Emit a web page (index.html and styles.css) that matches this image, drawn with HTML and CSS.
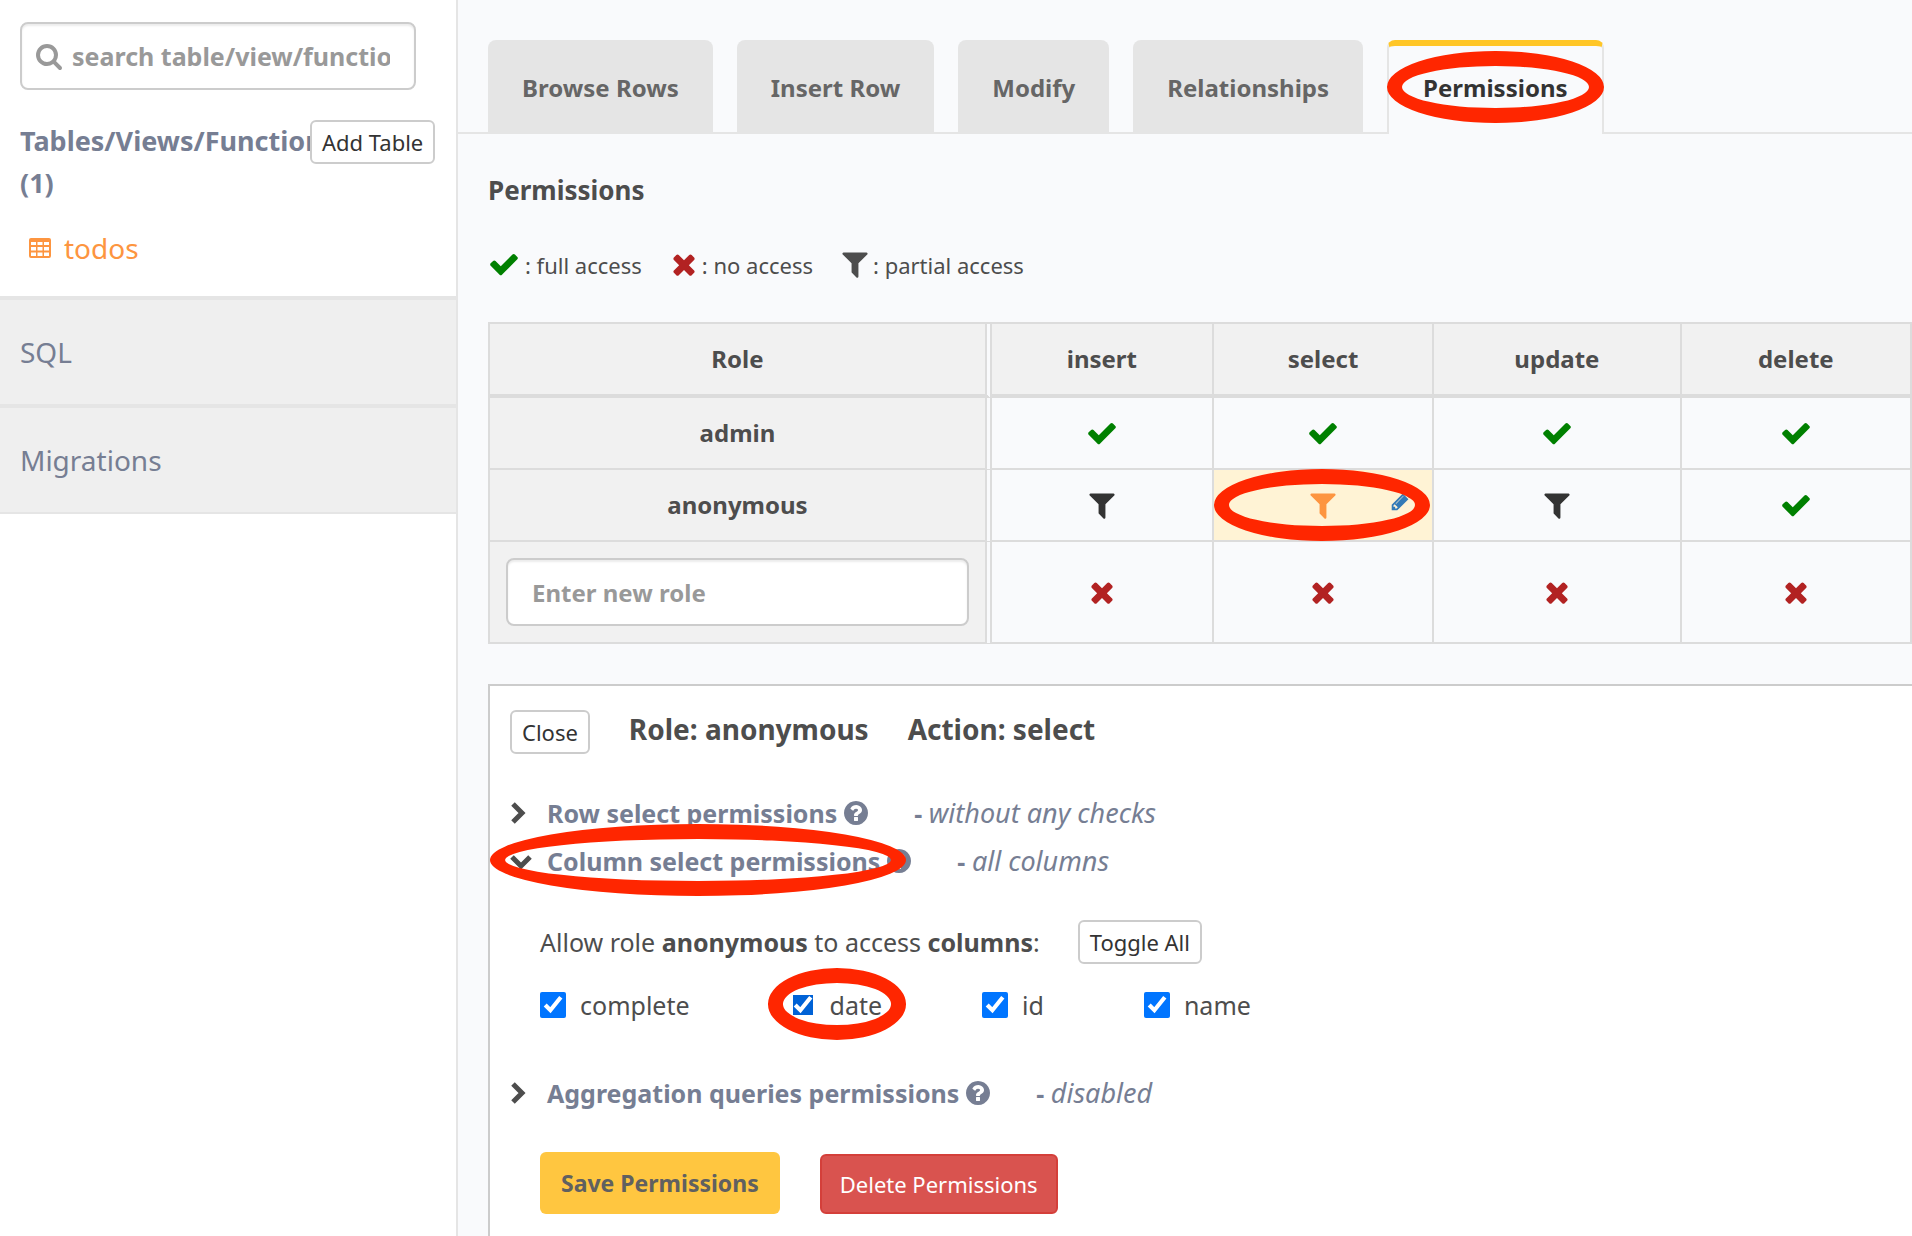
FILE: index.html
```html
<!DOCTYPE html>
<html lang="en">
<head>
<meta charset="utf-8">
<title>Permissions - todos</title>
<link rel="stylesheet" href="styles.css">
</head>
<body>
<svg class="sprite" aria-hidden="true">
  <symbol id="check" viewBox="0 0 1792 1792"><path d="M1671 566q0 40-28 68l-724 724-136 136q-28 28-68 28t-68-28l-136-136-362-362q-28-28-28-68t28-68l136-136q28-28 68-28t68 28l294 295 656-657q28-28 68-28t68 28l136 136q28 28 28 68z"/></symbol>
  <symbol id="times" viewBox="0 0 1792 1792"><path d="M1490 1322q0 40-28 68l-136 136q-28 28-68 28t-68-28l-294-294-294 294q-28 28-68 28t-68-28l-136-136q-28-28-28-68t28-68l294-294-294-294q-28-28-28-68t28-68l136-136q28-28 68-28t68 28l294 294 294-294q28-28 68-28t68 28l136 136q28 28 28 68t-28 68l-294 294 294 294q28 28 28 68z"/></symbol>
  <symbol id="filter" viewBox="0 0 1792 1792"><path d="M1595 295q17 41-14 70l-493 493v742q0 42-39 59-13 5-25 5-27 0-45-19l-256-256q-19-19-19-45v-486l-493-493q-31-29-14-70 17-39 59-39h1280q42 0 59 39z"/></symbol>
  <symbol id="search" viewBox="0 0 1792 1792"><path d="M1216 832q0-185-131.5-316.5t-316.5-131.5-316.5 131.5-131.5 316.5 131.5 316.5 316.5 131.5 316.5-131.5 131.5-316.5zm512 832q0 52-38 90t-90 38q-54 0-90-38l-343-342q-179 124-399 124-143 0-273.5-55.5t-225-150-150-225-55.5-273.5 55.5-273.5 150-225 225-150 273.5-55.5 273.5 55.5 225 150 150 225 55.5 273.5q0 220-124 399l343 343q37 37 37 90z"/></symbol>
  <symbol id="pencil" viewBox="0 0 1792 1792"><path d="M491 1536l91-91-235-235-91 91v107h128v128h107zm523-928q0-22-22-22-10 0-17 7l-542 542q-7 7-7 17 0 22 22 22 10 0 17-7l542-542q7-7 7-17zm-54-192l416 416-832 832h-416v-416zm683 96q0 53-37 90l-166 166-416-416 166-165q36-38 90-38 53 0 91 38l235 234q37 39 37 91z"/></symbol>
  <symbol id="question" viewBox="0 0 1792 1792"><path d="M1024 1376v-192q0-14-9-23t-23-9h-192q-14 0-23 9t-9 23v192q0 14 9 23t23 9h192q14 0 23-9t9-23zm256-672q0-88-55.5-163t-138.5-116-170-41q-243 0-371 213-15 24 8 42l132 100q7 6 19 6 16 0 25-12 53-68 86-92 34-24 86-24 48 0 85.5 26t37.5 59q0 38-20 61t-68 45q-63 28-115.5 86.5t-52.5 125.5v36q0 14 9 23t23 9h192q14 0 23-9t9-23q0-19 21.5-49.5t54.5-49.5q32-18 49-28.5t46-35 44.5-48 28-60.5 12.5-81zm384 192q0 209-103 385.5t-279.5 279.5-385.5 103-385.5-103-279.5-279.5-103-385.5 103-385.5 279.5-279.5 385.5-103 385.5 103 279.5 279.5 103 385.5z"/></symbol>
  <symbol id="grid" viewBox="0 0 24 20"><path fill-rule="evenodd" d="M3 0h18a2 2 0 0 1 2 2v16a2 2 0 0 1-2 2H3a2 2 0 0 1-2-2V2a2 2 0 0 1 2-2zM3 4v3h5V4zM9.500 4v3h5V4zM16 4v3h5V4zM3 9v3.500h5V9zM9.500 9v3.500h5V9zM16 9v3.500h5V9zM3 14.500V18h5v-3.500zM9.500 14.500V18h5v-3.500zM16 14.500V18h5v-3.500z"/></symbol>
  <symbol id="right" viewBox="0 0 22 22"><path d="M3 2l9 9-9 9" fill="none" stroke="currentColor" stroke-width="5"/></symbol>
  <symbol id="down" viewBox="0 0 22 22"><path d="M2 7l9 9 9-9" fill="none" stroke="currentColor" stroke-width="5"/></symbol>
</svg>

<div class="app">
  <aside class="sidebar">
    <section class="tables">
      <label class="search">
        <svg class="icon-md"><use href="#search"/></svg>
        <input class="field" type="text" placeholder="search table/view/function" aria-label="search table/view/function">
      </label>
      <div class="tables-head">
        <h2 class="tables-title">Tables/Views/Functions (1)</h2>
        <button class="btn add" type="button">Add Table</button>
      </div>
      <a class="table-link" href="#todos"><svg class="icon-grid"><use href="#grid"/></svg>todos</a>
    </section>
    <nav class="side-nav">
      <a href="#sql">SQL</a>
      <a href="#migrations">Migrations</a>
    </nav>
  </aside>

  <main class="main">
    <nav class="tabs">
      <a class="tab" href="#browse">Browse Rows</a>
      <a class="tab" href="#insert">Insert Row</a>
      <a class="tab" href="#modify">Modify</a>
      <a class="tab" href="#relationships">Relationships</a>
      <a class="tab active" href="#permissions">Permissions<i class="ring ring-tab"></i></a>
    </nav>

    <div class="content">
      <h1 class="title">Permissions</h1>
      <div class="legend">
        <span><svg class="icon full"><use href="#check"/></svg>: full access</span>
        <span><svg class="icon none"><use href="#times"/></svg>: no access</span>
        <span><svg class="icon"><use href="#filter"/></svg>: partial access</span>
      </div>

      <table class="roles">
        <colgroup><col class="c-role"><col class="c-insert"><col class="c-select"><col class="c-update"><col></colgroup>
        <thead>
          <tr><th>Role</th><th>insert</th><th>select</th><th>update</th><th>delete</th></tr>
        </thead>
        <tbody>
          <tr>
            <th>admin</th>
            <td><svg class="icon full"><use href="#check"/></svg></td>
            <td><svg class="icon full"><use href="#check"/></svg></td>
            <td><svg class="icon full"><use href="#check"/></svg></td>
            <td><svg class="icon full"><use href="#check"/></svg></td>
          </tr>
          <tr>
            <th>anonymous</th>
            <td><svg class="icon partial"><use href="#filter"/></svg></td>
            <td class="selected"><svg class="icon"><use href="#filter"/></svg><svg class="edit"><use href="#pencil"/></svg><i class="ring ring-cell"></i></td>
            <td><svg class="icon partial"><use href="#filter"/></svg></td>
            <td><svg class="icon full"><use href="#check"/></svg></td>
          </tr>
          <tr class="new-role">
            <th><input class="field" type="text" placeholder="Enter new role" aria-label="Enter new role"></th>
            <td><svg class="icon none"><use href="#times"/></svg></td>
            <td><svg class="icon none"><use href="#times"/></svg></td>
            <td><svg class="icon none"><use href="#times"/></svg></td>
            <td><svg class="icon none"><use href="#times"/></svg></td>
          </tr>
        </tbody>
      </table>

      <section class="panel">
        <header class="panel-head">
          <button class="btn" type="button">Close</button>
          <h2>Role: anonymous</h2>
          <h2>Action: select</h2>
        </header>

        <div class="section">
          <svg class="chevron"><use href="#right"/></svg>
          <b>Row select permissions</b>
          <svg class="icon-md"><use href="#question"/></svg>
          <span class="note"><b>-</b> <em>without any checks</em></span>
        </div>
        <div class="section">
          <svg class="chevron"><use href="#down"/></svg>
          <b>Column select permissions</b>
          <svg class="icon-md"><use href="#question"/></svg>
          <span class="note"><b>-</b> <em>all columns</em></span>
          <i class="ring ring-section"></i>
        </div>

        <div class="columns">
          <div class="allow">
            <span>Allow role <b>anonymous</b> to access <b>columns</b>:</span>
            <button class="btn" type="button">Toggle All</button>
          </div>
          <div class="checks">
            <label><input type="checkbox" checked>complete</label>
            <label><input class="focused" type="checkbox" checked>date<i class="ring ring-check"></i></label>
            <label><input type="checkbox" checked>id</label>
            <label><input type="checkbox" checked>name</label>
          </div>
        </div>

        <div class="section">
          <svg class="chevron"><use href="#right"/></svg>
          <b>Aggregation queries permissions</b>
          <svg class="icon-md"><use href="#question"/></svg>
          <span class="note"><b>-</b> <em>disabled</em></span>
        </div>

        <div class="actions">
          <button class="save" type="button">Save Permissions</button>
          <button class="delete" type="button">Delete Permissions</button>
        </div>
      </section>
    </div>
  </main>
</div>
</body>
</html>
```
FILE: styles.css
```css
* { box-sizing: border-box; }
body {
  margin: 0;
  background: #f9fafc;
  color: #4d4d4d;
  font: 25px/48px "Noto Sans", sans-serif;
}
h1, h2 { margin: 0; }
a { color: inherit; text-decoration: none; }
button, input { font: inherit; margin: 0; }
svg { fill: currentColor; flex: none; }
.sprite { display: none; }
.icon { width: 32px; height: 32px; }
.icon-md { width: 28px; height: 28px; }
.full { color: #008000; }
.none { color: #b22222; }
.partial { color: #333; }

.app { display: flex; min-height: 100vh; }

/* Sidebar */
.sidebar {
  flex: none;
  width: 458px;
  background: #fff;
  border-right: 2px solid #e5e5e5;
  color: #767e93;
}
.tables { padding: 22px 20px 24px; }
.field {
  display: block;
  width: 100%;
  height: 68px;
  padding: 0 24px;
  border: 2px solid #ccc;
  border-radius: 8px;
  background: #fff;
  box-shadow: inset 0 2px 2px rgba(0, 0, 0, .08);
  font-weight: bold;
}
.field::placeholder { color: #999; opacity: 1; }
.search { display: grid; width: 396px; align-items: center; }
.search > * { grid-area: 1 / 1; }
.search .field { padding-left: 50px; }
.search .icon-md { z-index: 1; margin-left: 15px; color: #999; }
.tables-head { display: flex; margin-top: 30px; }
.tables-title {
  flex: none;
  width: 290px;
  font-size: 27px;
  line-height: 42px;
}
.btn {
  flex: none;
  height: 44px;
  padding: 0 10px;
  border: 2px solid #ccc;
  border-radius: 6px;
  background: #fff;
  color: #333;
  font-size: 22px;
  line-height: 40px;
}
.add { z-index: 1; }
.table-link {
  display: flex;
  align-items: center;
  gap: 12px;
  margin-top: 20px;
  padding-left: 8px;
  color: #fd9540;
  font-size: 28px;
}
.icon-grid { width: 24px; height: 20px; }
.side-nav { border-bottom: 2px solid #e5e5e5; }
.side-nav a {
  display: block;
  height: 108px;
  padding: 0 20px;
  border-top: 4px solid #e5e5e5;
  background: #efefef;
  font-size: 28px;
  line-height: 104px;
}

/* Tabs */
.main { flex: 1; min-width: 0; display: flex; flex-direction: column; }
.tabs {
  display: flex;
  gap: 24px;
  padding: 40px 0 0 30px;
  border-bottom: 2px solid #e5e5e5;
}
.tab {
  position: relative;
  height: 92px;
  padding: 0 34px;
  border-radius: 8px 8px 0 0;
  background: #e5e5e5;
  color: #666;
  font-size: 24px;
  font-weight: bold;
  line-height: 96px;
}
.tab.active {
  height: 94px;
  margin-bottom: -2px;
  border: 2px solid #e5e5e5;
  border-top: 6px solid #ffc627;
  border-bottom: 0;
  background: #f9fafc;
  color: #333;
  line-height: 84px;
}

/* Red highlight rings */
.ring {
  position: absolute;
  border: 15px solid #ff2600;
  border-radius: 50%;
  height: 72px;
  pointer-events: none;
}
.ring-tab { top: 5px; left: -2px; right: -2px; }
.ring-cell { top: -1px; left: 0; right: 2px; }
.ring-section { top: -13px; left: -20px; width: 416px; }
.ring-check { top: -13px; left: -22px; right: -24px; }

/* Permissions table */
.content { flex: 1; display: flex; flex-direction: column; padding: 32px 0 0 30px; }
.title { font-size: 26px; line-height: 48px; }
.legend { display: flex; gap: 28px; margin: 27px 0 33px; font-size: 22px; line-height: 48px; }
.legend span { display: flex; align-items: center; gap: 5px; }
.legend svg { margin-bottom: 3px; }
.legend span + span svg { margin-left: -2px; margin-right: -3px; }
.roles {
  width: 100%;
  table-layout: fixed;
  border-collapse: separate;
  border-spacing: 0;
  border: solid #dcdcdc;
  border-width: 2px 0 0 2px;
  font-size: 24px;
  line-height: 48px;
  text-align: center;
}
.c-role { width: 35.3%; }
.c-insert { width: 15.6%; }
.c-select { width: 15.5%; }
.c-update { width: 17.4%; }
.roles th, .roles td {
  position: relative;
  height: 72px;
  padding: 0 16px;
  border: solid #dcdcdc;
  border-width: 0 2px 2px 0;
}
.roles th { background: #f1f1f1; }
.roles th:first-child { border-right: 7px double #dcdcdc; background-clip: padding-box; }
.roles thead th { height: 74px; border-bottom-width: 4px; }
.roles td svg { display: block; margin: auto; }
.roles .new-role > * { height: 102px; }
.roles .selected { background: #fff3d5; color: #fd9540; }
.roles .edit {
  position: absolute;
  top: 18px;
  right: 18px;
  width: 24px;
  height: 24px;
  color: #337ab7;
}

/* Editor panel */
.panel {
  flex: 1;
  margin-top: 40px;
  padding: 24px 20px 22px;
  border: solid #ccc;
  border-width: 2px 0 0 2px;
  background: #fff;
}
.panel-head { display: flex; gap: 39px; margin-bottom: 35px; }
.panel-head h2 { font-size: 28px; line-height: 38px; }
.section {
  position: relative;
  display: flex;
  align-items: center;
  height: 48px;
  color: #767e93;
}
.chevron { width: 22px; height: 22px; margin-right: 15px; color: #4d4d4d; }
.section .icon-md { margin: 0 44px 0 5px; }
.note em { font-size: 27px; }
.columns { padding: 35px 0 40px 30px; }
.allow { display: flex; align-items: center; gap: 38px; height: 44px; margin-bottom: 17px; }
.checks { display: flex; gap: 100px; }
.checks label { position: relative; display: flex; align-items: center; gap: 14px; }
.checks input { width: 26px; height: 26px; accent-color: #0075ff; }
.checks .focused {
  accent-color: #0062d6;
  outline: 3px solid #fff;
  outline-offset: -3px;
  border-radius: 8px;
}
.actions { display: flex; align-items: flex-end; gap: 40px; margin-top: 35px; padding-left: 30px; }
.save {
  height: 62px;
  padding: 0 21px;
  border: 0;
  border-radius: 6px;
  background: #ffc640;
  color: #606060;
  font-size: 23px;
  font-weight: bold;
}
.delete {
  height: 60px;
  padding: 0 18px;
  border: 2px solid #d43f3a;
  border-radius: 6px;
  background: #d9534f;
  color: #fff;
  font-size: 22px;
}
```
